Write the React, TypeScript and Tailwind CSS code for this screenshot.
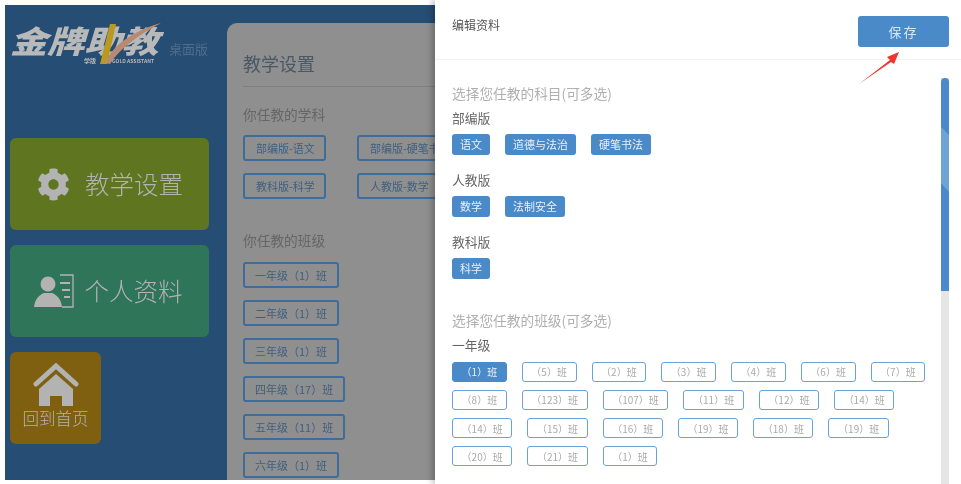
import { FaCog } from 'react-icons/fa'

const cjk = { fontFamily: '"Noto Sans CJK SC", "Noto Sans", sans-serif' }

const subjectGroups = [
  { title: '部编版', items: ['语文', '道德与法治', '硬笔书法'] },
  { title: '人教版', items: ['数学', '法制安全'] },
  { title: '教科版', items: ['科学'] },
]

const classes = [
  '（1）', '（5）', '（2）', '（3）', '（4）', '（6）', '（7）',
  '（8）', '（123）', '（107）', '（11）', '（12）', '（14）',
  '（14）', '（15）', '（16）', '（19）', '（18）', '（19）',
  '（20）', '（21）', '（1）',
]

const teachingClasses = ['一年级（1）班', '二年级（1）班', '三年级（1）班', '四年级（17）班', '五年级（11）班', '六年级（1）班']

const Logo = () => (
  <div className="relative h-[46px] w-[204px]">
    <div className="mt-[1px] flex h-[32px] w-[126px] origin-left scale-x-[1.2] items-center text-[31px] leading-[32px] font-black whitespace-nowrap italic text-[#b9b9b9]">
      金牌助教
    </div>
    <svg className="absolute top-0 left-[85px]" width="70" height="44" viewBox="0 0 70 44">
      <path d="M15 1 L5 41 L12 41 L21 1 Z" fill="#b99a1e" />
      <path d="M10 40 C18 22 38 8 66 0 C44 12 26 24 15 41 Z" fill="#b98a72" />
    </svg>
    <div className="absolute top-[34px] left-[74px] flex items-center gap-[16px] text-[6px] leading-[7px] font-bold text-[#b9b9b9]">
      <span>学版</span>
      <span className="text-[5px] whitespace-nowrap">GOLD ASSISTANT</span>
    </div>
  </div>
)

const ContactIcon = () => (
  <svg width="40" height="34" viewBox="0 0 40 34" fill="#b3b3b3">
    <circle cx="14" cy="10" r="7.5" />
    <path d="M0 33 C1 25 5 21 10 19 L18 19 C23 21 27 25 28 33 Z" />
    <path d="M26 1 H39 V33 H28" fill="none" stroke="#b3b3b3" strokeWidth="1.3" />
    <path d="M26 9 H36 M28 16 H36 M30 23 H36" fill="none" stroke="#b3b3b3" strokeWidth="2" />
  </svg>
)

const HomeIcon = () => (
  <svg width="46" height="43" viewBox="0 0 46 43" fill="#b3b3b3">
    <path d="M3 21 L23 3 L43 21" fill="none" stroke="#b3b3b3" strokeWidth="5" strokeLinecap="round" />
    <path d="M6 26 L23 11 L40 26 V43 H29 V33 H17 V43 H6 Z" />
  </svg>
)

const Sidebar = () => (
  <aside className="flex w-[222px] shrink-0 flex-col pt-[18px] pl-[5px]">
    <div className="flex items-start">
      <Logo />
    </div>
    <div className="-mt-[29px] ml-[159px] text-[13px] leading-[18px] text-[#4f6c8c]">桌面版</div>
    <div className="mt-[80px] flex h-[92px] w-[199px] items-center justify-center gap-[15px] rounded-[6px] bg-[#5f751f] pl-[1px] text-[24.5px] font-light text-[#b3b3b3]">
      <FaCog size={33} />
      <span>教学设置</span>
    </div>
    <div className="mt-[15px] flex h-[92px] w-[199px] items-center justify-center gap-[11px] rounded-[6px] bg-[#2f7559] pr-[3px] text-[24.5px] font-light text-[#b3b3b3]">
      <ContactIcon />
      <span>个人资料</span>
    </div>
    <div className="mt-[15px] flex h-[92px] w-[91px] flex-col items-center rounded-[6px] bg-[#7f6010] pt-[11px] text-[16.5px] leading-[24px] font-light text-[#b3b3b3]">
      <HomeIcon />
      <span>回到首页</span>
    </div>
  </aside>
)

const SettingsPanel = () => (
  <main className="mt-[18px] flex-1 overflow-hidden rounded-tl-[10px] bg-[#8f8f8f] pl-[16px]">
    <h1 className="mt-[26px] text-[18px] leading-[28px] text-[#4a5866]">教学设置</h1>
    <div className="mt-[9px] h-px bg-[#7f7f7f]" />
    <div className="mt-[17px] text-[13.7px] leading-[20px] text-[#666]">你任教的学科</div>
    <div className="mt-[11px] grid w-[300px] grid-cols-[83px_120px] gap-x-[31px] gap-y-[12px] whitespace-nowrap">
      {['部编版-语文', '部编版-硬笔书法', '教科版-科学', '人教版-数学'].map((label) => (
        <div
          key={label}
          className="flex h-[26px] items-center rounded-[3px] border-2 border-[#3e6d9b] pl-[11px] text-[11px] text-[#3f5f80]"
        >
          {label}
        </div>
      ))}
    </div>
    <div className="mt-[31px] text-[13.7px] leading-[20px] text-[#666]">你任教的班级</div>
    <div className="mt-[12px] flex flex-col items-start gap-[12px]">
      {teachingClasses.map((label) => (
        <div
          key={label}
          className="flex h-[26px] items-center rounded-[3px] border-2 border-[#3e6d9b] px-[10px] text-[11px] whitespace-nowrap text-[#3f5f80]"
        >
          {label}
        </div>
      ))}
    </div>
  </main>
)

const Chip = ({ children }: { children: string }) => (
  <span className="flex h-[21px] items-center rounded-[3px] bg-[#4a8ac9] px-[8px] text-[11px] text-[#e8f0f8]">
    {children}
  </span>
)

const Drawer = () => (
  <section className="absolute top-0 right-0 bottom-0 left-[435px] bg-white shadow-[-3px_0_6px_rgba(0,0,0,0.25)]">
    <header className="flex h-[60px] items-start justify-between border-b border-[#f2f2f2] pt-[16px] pr-[12px] pl-[17px]">
      <span className="mt-[1px] text-[12px] leading-[16px] text-[#555]">编辑资料</span>
      <button className="h-[31px] w-[91px] rounded-[3px] bg-[#4a8ac9] text-[13px] tracking-[2px] text-[#d8e6f4]">保存</button>
    </header>
    <div className="w-[492px] pt-[23px] pl-[17px]">
      <div className="text-[13.7px] leading-[20px] text-[#b0b0b0]">选择您任教的科目(可多选)</div>
      {subjectGroups.map((group, i) => (
        <div key={group.title} className={i === 0 ? 'mt-[5px]' : 'mt-[15px]'}>
          <div className="text-[12.8px] leading-[20px] text-[#666]">{group.title}</div>
          <div className="mt-[6px] flex gap-[15px]">
            {group.items.map((item) => (
              <Chip key={item}>{item}</Chip>
            ))}
          </div>
        </div>
      ))}
      <div className="mt-[31px] text-[13.7px] leading-[20px] text-[#b0b0b0]">选择您任教的班级(可多选)</div>
      <div className="mt-[5px] text-[12.8px] leading-[20px] text-[#666]">一年级</div>
      <div className="mt-[6.5px] flex flex-wrap gap-x-[15px] gap-y-[8.3px]">
        {classes.map((label, i) => (
          <span
            key={i}
            className={
              i === 0
                ? 'flex h-[20px] items-center rounded-[3px] border-[1.5px] border-[#4a8ac9] bg-[#4a8ac9] px-[8.6px] text-[10px] whitespace-nowrap text-[#eef4fa]'
                : 'flex h-[20px] items-center rounded-[3px] border-[1.5px] border-[#6aa3d8] bg-white px-[8.6px] text-[10px] whitespace-nowrap text-[#aaa]'
            }
          >
            {label}班
          </span>
        ))}
      </div>
    </div>
    <div className="absolute top-[78px] right-[12px] bottom-0 w-[8px] bg-[#e6e6e6]">
      <div className="h-[213px] rounded-t-[4px] bg-[#4a8ac9]">
        <svg className="absolute top-[49px] left-0" width="8" height="65" viewBox="0 0 8 65">
          <path d="M0 0 L8 8 V65 L0 56 Z" fill="#6fa3d6" />
        </svg>
      </div>
    </div>
    <svg className="absolute top-[50px] left-[423px]" width="44" height="36" viewBox="0 0 44 36">
      <path d="M1 34 L32 10 L29 7 L41 2 L36 14 L33 12 Z" fill="#f2342a" />
    </svg>
  </section>
)

export default function App() {
  return (
    <div className="relative h-[484px] w-[961px] overflow-hidden bg-white blur-[0.4px]" style={cjk}>
      <div className="mt-[5px] ml-[5px] flex h-[475px] w-[430px] bg-[#264d73]">
        <Sidebar />
        <SettingsPanel />
      </div>
      <Drawer />
    </div>
  )
}
